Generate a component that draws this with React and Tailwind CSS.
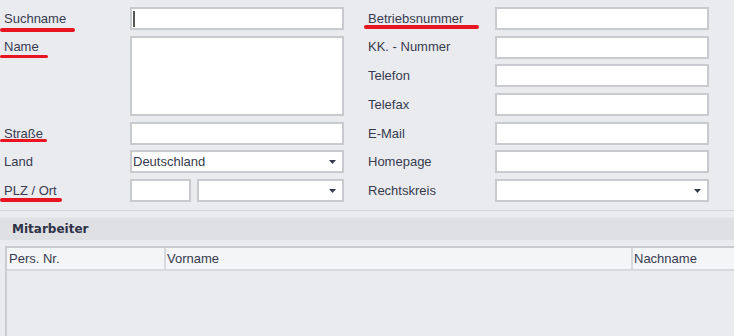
function Field({ children, className = '' }) {
  return (
    <div className={`h-[23px] bg-white border-2 border-[#c9cacf] ${className}`}>
      {children}
    </div>
  );
}

function Select({ value = '', className = '' }) {
  return (
    <div className={`h-[23px] bg-white border-2 border-[#c9cacf] flex items-center justify-between pl-[1px] pr-[6px] ${className}`}>
      <span className="text-[13px] text-[#383b50]">{value}</span>
      <svg width="7" height="4" viewBox="0 0 7 4">
        <path d="M0 0 L7 0 L3.5 4 Z" fill="#383b50" />
      </svg>
    </div>
  );
}

function Label({ text, mark, markWidth, markTop = 'top-[19px]', className = '' }) {
  return (
    <div className={`relative h-[23px] flex items-center text-[13px] text-[#383b50] ${className}`}>
      {text}
      {mark && (
        <span
          className={`absolute left-[-4px] ${markTop} h-[3.5px] rounded-full bg-[#e8141f]`}
          style={{ width: markWidth }}
        />
      )}
    </div>
  );
}

export default function App() {
  return (
    <div
      className="w-[734px] h-[336px] overflow-hidden bg-[#eaebef]"
      style={{ fontFamily: '"Liberation Sans", Arial, sans-serif' }}
    >
      {/* Stammdaten */}
      <div className="pl-[4px] pt-[7px] grid grid-cols-[126px_214px_151px_214px] grid-rows-[repeat(7,23px)] gap-y-[5.7px]">
        {/* Zeile 1 */}
        <Label className="row-start-1 col-start-1" text="Suchname" mark markWidth={75} markTop="top-[21px]" />
        <Field className="row-start-1 col-start-2 flex items-center pl-[1px]">
          <span className="w-[2px] h-[16px] bg-[#555]" />
        </Field>
        <Label className="row-start-1 col-start-3 ml-[24px]" text="Betriebsnummer" mark markWidth={115} markTop="top-[18px]" />
        <Field className="row-start-1 col-start-4" />

        {/* Zeile 2-4 */}
        <Label className="row-start-2 col-start-1" text="Name" mark markWidth={48} markTop="top-[19px]" />
        <div className="row-start-2 row-span-3 col-start-2 bg-white border-2 border-[#c9cacf]" />
        <Label className="row-start-2 col-start-3 ml-[24px]" text="KK. - Nummer" />
        <Field className="row-start-2 col-start-4" />

        <Label className="row-start-3 col-start-3 ml-[24px]" text="Telefon" />
        <Field className="row-start-3 col-start-4" />

        <Label className="row-start-4 col-start-3 ml-[24px]" text="Telefax" />
        <Field className="row-start-4 col-start-4" />

        {/* Zeile 5 */}
        <Label className="row-start-5 col-start-1" text="Straße" mark markWidth={47} markTop="top-[17px]" />
        <Field className="row-start-5 col-start-2" />
        <Label className="row-start-5 col-start-3 ml-[24px]" text="E-Mail" />
        <Field className="row-start-5 col-start-4" />

        {/* Zeile 6 */}
        <Label className="row-start-6 col-start-1" text="Land" />
        <Select className="row-start-6 col-start-2" value="Deutschland" />
        <Label className="row-start-6 col-start-3 ml-[24px]" text="Homepage" />
        <Field className="row-start-6 col-start-4" />

        {/* Zeile 7 */}
        <Label className="row-start-7 col-start-1" text="PLZ / Ort" mark markWidth={62} markTop="top-[19px]" />
        <div className="row-start-7 col-start-2 flex gap-[6px]">
          <Field className="w-[61px]" />
          <Select className="flex-1" />
        </div>
        <Label className="row-start-7 col-start-3 ml-[24px]" text="Rechtskreis" />
        <Select className="row-start-7 col-start-4" />
      </div>

      {/* Trenner */}
      <div className="mt-[8px] border-t border-[#d3d4d8]" />

      {/* Mitarbeiter */}
      <div className="mt-[6px] h-[23px] bg-[#dfe0e4] border-t border-[#e6e7ea] flex items-center pl-[12px]">
        <span
          className="text-[12px] font-bold text-[#2f3247]"
          style={{ fontFamily: '"DejaVu Sans", sans-serif' }}
        >
          Mitarbeiter
        </span>
      </div>

      <div className="ml-[5px] mt-[6px] border-t-2 border-l-2 border-[#cbccd0]">
        <div className="flex h-[23px] bg-[#f4f5f7] border-b-2 border-[#d8d9dd] text-[13px] text-[#383b50]">
          <div className="w-[159px] pl-[2px] flex items-center border-r-2 border-[#d8d9dd]">Pers. Nr.</div>
          <div className="w-[467px] pl-[1px] flex items-center border-r-2 border-[#d8d9dd]">Vorname</div>
          <div className="flex-1 pl-[1px] flex items-center">Nachname</div>
        </div>
        <div className="h-[80px]" />
      </div>
    </div>
  );
}
